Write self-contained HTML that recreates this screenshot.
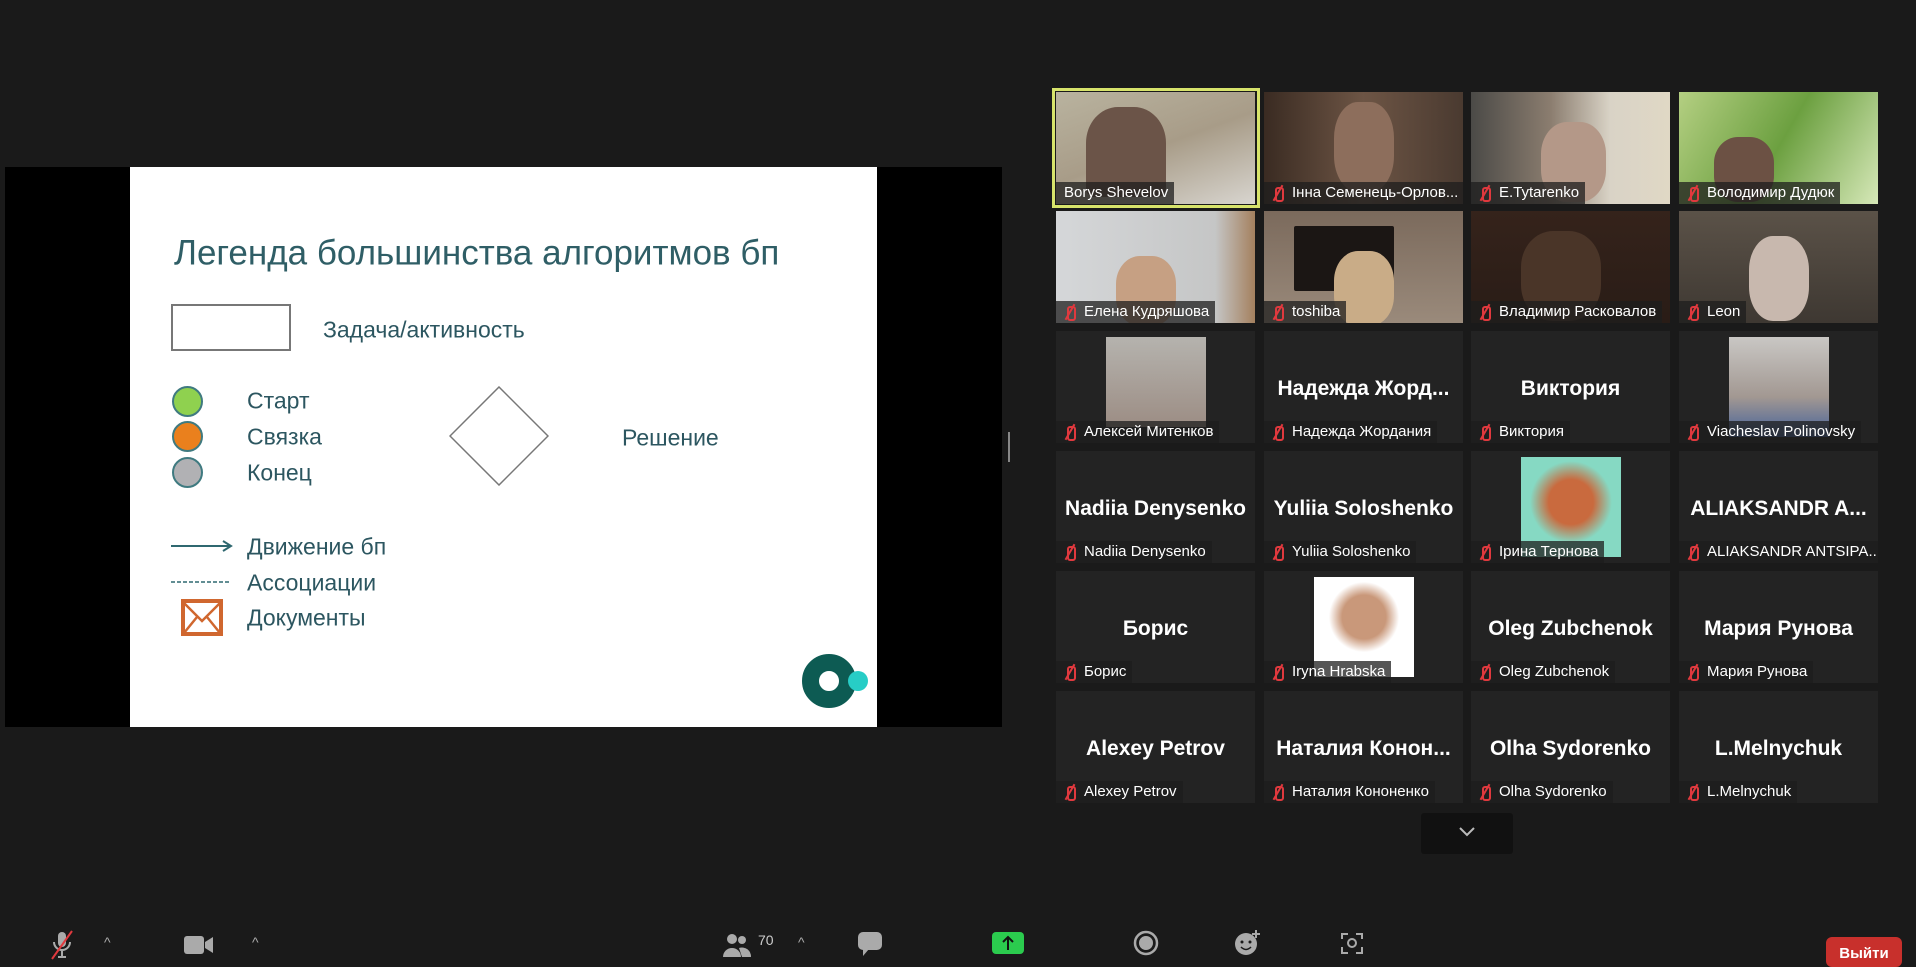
<!DOCTYPE html>
<html><head><meta charset="utf-8"><style>
*{margin:0;padding:0;box-sizing:border-box}
body{width:1916px;height:961px;background:#1a1a1a;position:relative;overflow:hidden;font-family:"Liberation Sans","Noto Sans CJK SC",sans-serif}
.share{position:absolute;left:5px;top:167px;width:997px;height:560px;background:#000}
.slide{position:absolute;left:130px;top:167px;width:747px;height:560px;background:#fff;color:#34595f}
.abs{position:absolute}
.t{position:absolute;font-size:23px;color:#2c5660;line-height:1;transform:translateY(-50%)}
.tile{position:absolute;width:199px;height:112px;background:#232323;overflow:hidden}
.big{position:absolute;left:0;right:0;top:46px;text-align:center;color:#fff;font-weight:bold;font-size:21px;white-space:nowrap}
.lbl{position:absolute;left:0;bottom:0;height:22px;background:rgba(30,30,30,.75);color:#fff;font-size:15px;line-height:22px;padding:0 6px 0 28px;white-space:nowrap;max-width:199px;overflow:hidden}
.lbl:before{content:"";position:absolute;left:11px;top:5px;width:5px;height:11px;border:2px solid #e0393e;border-radius:3px}
.lbl:after{content:"";position:absolute;left:13px;top:2px;width:2px;height:18px;background:#e0393e;transform:rotate(30deg)}
.nomic{padding-left:8px}.nomic:before,.nomic:after{display:none}
.ph{position:absolute;top:6px;width:100px;height:100px}
.ic{position:absolute;top:930px;fill:#aaa;color:#aaa}
</style></head><body>
<div class="share"></div>
<div class="slide">
 <div class="t" style="left:44px;top:86px;font-size:35px;color:#2f5e66">Легенда большинства алгоритмов бп</div>
 <div class="abs" style="left:41px;top:137px;width:120px;height:47px;border:2px solid #777"></div>
 <div class="t" style="left:193px;top:163px">Задача/активность</div>
 <div class="abs" style="left:42px;top:219px;width:31px;height:31px;border-radius:50%;background:#8fd14f;border:2px solid #3f7a80"></div>
 <div class="abs" style="left:42px;top:254px;width:31px;height:31px;border-radius:50%;background:#ea801d;border:2px solid #3f7a80"></div>
 <div class="abs" style="left:42px;top:290px;width:31px;height:31px;border-radius:50%;background:#b1b1b4;border:2px solid #3f7a80"></div>
 <div class="t" style="left:117px;top:234px">Старт</div>
 <div class="t" style="left:117px;top:270px">Связка</div>
 <div class="t" style="left:117px;top:306px">Конец</div>
 <svg class="abs" style="left:319px;top:219px" width="100" height="100"><polygon points="50,1 99,50 50,99 1,50" fill="none" stroke="#777" stroke-width="1.5"/></svg>
 <div class="t" style="left:492px;top:271px">Решение</div>
 <svg class="abs" style="left:41px;top:370px" width="64" height="18"><line x1="0" y1="9" x2="58" y2="9" stroke="#2f6870" stroke-width="2"/><path d="M52 4 L60 9 L52 14" fill="none" stroke="#2f6870" stroke-width="2"/></svg>
 <div class="t" style="left:117px;top:380px">Движение бп</div>
 <svg class="abs" style="left:41px;top:406px" width="64" height="18"><line x1="0" y1="9" x2="60" y2="9" stroke="#2f6870" stroke-width="1.5" stroke-dasharray="4 2"/></svg>
 <div class="t" style="left:117px;top:416px">Ассоциации</div>
 <svg class="abs" style="left:51px;top:432px" width="42" height="37"><rect x="2" y="2" width="38" height="33" fill="#fff" stroke="#d0672f" stroke-width="4"/><path d="M3 4 L21 22 L39 4 M3 34 L16 18 M39 34 L26 18" fill="none" stroke="#d0672f" stroke-width="2.5"/></svg>
 <div class="t" style="left:117px;top:451px">Документы</div>
 <div class="abs" style="left:672px;top:487px;width:54px;height:54px;border-radius:50%;border:17px solid #0d5b53"></div>
 <div class="abs" style="left:718px;top:504px;width:20px;height:20px;border-radius:50%;background:#27cdc6"></div>
</div>
<div class="abs" style="left:1008px;top:432px;width:2px;height:30px;border-left:1px solid #888;border-right:1px solid #888"></div>

<div class="abs" style="left:1052px;top:88px;width:208px;height:120px;border:3px solid #d7e36b"></div>
<div class="tile" style="left:1056px;top:92px;background:linear-gradient(160deg,#b9b39f,#a89c88 50%,#d8d5cf)"><div class="ph" style="left:30px;top:15px;width:80px;height:90px;border-radius:40% 40% 10% 10%;background:#6b5448"></div><div class="lbl nomic">Borys Shevelov</div></div>
<div class="tile" style="left:1264px;top:92px;background:linear-gradient(90deg,#3a2b22,#6d5545 50%,#4a3a30)"><div class="ph" style="left:70px;top:10px;width:60px;height:90px;border-radius:40%;background:#8d6e5c"></div><div class="lbl">Інна Семенець-Орлов...</div></div>
<div class="tile" style="left:1471px;top:92px;background:linear-gradient(90deg,#4b4a47,#8b7d6f 40%,#d9d3c6 70%,#e0d8c5)"><div class="ph" style="left:70px;top:30px;width:65px;height:80px;border-radius:40%;background:#b49888"></div><div class="lbl">E.Tytarenko</div></div>
<div class="tile" style="left:1679px;top:92px;background:linear-gradient(120deg,#b4cf82,#6ca040 50%,#d6e8b8)"><div class="ph" style="left:35px;top:45px;width:60px;height:65px;border-radius:40%;background:#6c5144"></div><div class="lbl">Володимир Дудюк</div></div>
<div class="tile" style="left:1056px;top:211px;background:linear-gradient(90deg,#d5d7d9,#c5c6c6 80%,#a4805e)"><div class="ph" style="left:60px;top:45px;width:60px;height:70px;border-radius:40%;background:#c6a083"></div><div class="lbl">Елена Кудряшова</div></div>
<div class="tile" style="left:1264px;top:211px;background:linear-gradient(180deg,#7b6a5c,#9a8a7b)"><div class="ph" style="left:30px;top:15px;width:100px;height:65px;background:#1b1614;border-radius:2px"></div><div class="ph" style="left:70px;top:40px;width:60px;height:75px;border-radius:40%;background:#c9ac87"></div><div class="lbl">toshiba</div></div>
<div class="tile" style="left:1471px;top:211px;background:linear-gradient(180deg,#35231b,#291c16)"><div class="ph" style="left:50px;top:20px;width:80px;height:90px;border-radius:40%;background:#4a3528"></div><div class="lbl">Владимир Расковалов</div></div>
<div class="tile" style="left:1679px;top:211px;background:linear-gradient(180deg,#5b5248,#3e3832)"><div class="ph" style="left:70px;top:25px;width:60px;height:85px;border-radius:40%;background:#c8b8ae"></div><div class="lbl">Leon</div></div>
<div class="tile" style="left:1056px;top:331px"><div class="ph" style="left:50px;top:6px;width:100px;height:90px;background:linear-gradient(180deg,#b5b3ae,#9c8d84)"></div><div class="lbl">Алексей Митенков</div></div>
<div class="tile" style="left:1264px;top:331px"><div class="big">Надежда Жорд...</div><div class="lbl">Надежда Жордания</div></div>
<div class="tile" style="left:1471px;top:331px"><div class="big">Виктория</div><div class="lbl">Виктория</div></div>
<div class="tile" style="left:1679px;top:331px"><div class="ph" style="left:50px;top:6px;width:100px;height:100px;background:linear-gradient(180deg,#c9c7c4,#a29892 60%,#45629a)"></div><div class="lbl">Viacheslav Polinovsky</div></div>
<div class="tile" style="left:1056px;top:451px"><div class="big">Nadiia Denysenko</div><div class="lbl">Nadiia Denysenko</div></div>
<div class="tile" style="left:1264px;top:451px"><div class="big">Yuliia Soloshenko</div><div class="lbl">Yuliia Soloshenko</div></div>
<div class="tile" style="left:1471px;top:451px"><div class="ph" style="left:50px;top:6px;width:100px;height:100px;background:radial-gradient(circle at 50% 45%,#c96a3e 30%,#86d9c3 55%)"></div><div class="lbl">Ірина Тернова</div></div>
<div class="tile" style="left:1679px;top:451px"><div class="big">ALIAKSANDR A...</div><div class="lbl">ALIAKSANDR ANTSIPA...</div></div>
<div class="tile" style="left:1056px;top:571px"><div class="big">Борис</div><div class="lbl">Борис</div></div>
<div class="tile" style="left:1264px;top:571px"><div class="ph" style="left:50px;top:6px;width:100px;height:100px;background:radial-gradient(circle at 50% 40%,#c9987a 28%,#fff 45%)"></div><div class="lbl">Iryna Hrabska</div></div>
<div class="tile" style="left:1471px;top:571px"><div class="big">Oleg Zubchenok</div><div class="lbl">Oleg Zubchenok</div></div>
<div class="tile" style="left:1679px;top:571px"><div class="big">Мария Рунова</div><div class="lbl">Мария Рунова</div></div>
<div class="tile" style="left:1056px;top:691px"><div class="big">Alexey Petrov</div><div class="lbl">Alexey Petrov</div></div>
<div class="tile" style="left:1264px;top:691px"><div class="big">Наталия Конон...</div><div class="lbl">Наталия Кононенко</div></div>
<div class="tile" style="left:1471px;top:691px"><div class="big">Olha Sydorenko</div><div class="lbl">Olha Sydorenko</div></div>
<div class="tile" style="left:1679px;top:691px"><div class="big">L.Melnychuk</div><div class="lbl">L.Melnychuk</div></div>

<div class="abs" style="left:1421px;top:813px;width:92px;height:41px;background:#111;border-radius:3px"></div>
<svg class="abs" style="left:1458px;top:826px" width="18" height="12"><path d="M2 2 L9 9 L16 2" fill="none" stroke="#bbb" stroke-width="2"/></svg>

<svg class="ic" style="left:48px" width="28" height="30"><rect x="10" y="2" width="8" height="15" rx="4" fill="#aaa"/><path d="M6 12 a8 8 0 0 0 16 0 M14 20 v6 M10 27 h8" stroke="#aaa" stroke-width="2" fill="none"/><line x1="4" y1="29" x2="24" y2="1" stroke="#e0393e" stroke-width="2"/></svg>
<div class="abs" style="left:104px;top:934px;color:#aaa;font-size:14px">^</div>
<svg class="ic" style="left:183px;top:934px" width="32" height="22"><rect x="1" y="2" width="20" height="18" rx="3" fill="#aaa"/><path d="M22 8 L30 3 V19 L22 14Z" fill="#aaa"/></svg>
<div class="abs" style="left:252px;top:934px;color:#aaa;font-size:14px">^</div>
<svg class="ic" style="left:722px;top:932px" width="30" height="26"><circle cx="10" cy="7" r="5" fill="#aaa"/><path d="M1 25 a9 9 0 0 1 18 0Z" fill="#aaa"/><circle cx="20" cy="8" r="4" fill="#aaa"/><path d="M17 16 a9 9 0 0 1 12 9 h-9Z" fill="#aaa"/></svg>
<div class="abs" style="left:758px;top:932px;color:#ccc;font-size:14px">70</div>
<div class="abs" style="left:798px;top:934px;color:#aaa;font-size:14px">^</div>
<svg class="ic" style="left:857px;top:931px" width="26" height="26"><rect x="1" y="1" width="24" height="18" rx="5" fill="#aaa"/><path d="M6 18 L6 25 L12 18Z" fill="#aaa"/></svg>
<div class="abs" style="left:992px;top:932px;width:32px;height:22px;background:#2bcb4e;border-radius:4px"></div>
<svg class="abs" style="left:1000px;top:934px" width="16" height="18"><path d="M8 16 V3 M3 8 L8 3 L13 8" stroke="#111" stroke-width="2" fill="none"/></svg>
<svg class="ic" style="left:1133px;top:930px" width="26" height="26"><circle cx="13" cy="13" r="11" fill="none" stroke="#aaa" stroke-width="2.5"/><circle cx="13" cy="13" r="7" fill="#aaa"/></svg>
<svg class="ic" style="left:1233px;top:929px" width="28" height="28"><circle cx="13" cy="15" r="11" fill="#aaa"/><circle cx="9" cy="13" r="1.5" fill="#1a1a1a"/><circle cx="17" cy="13" r="1.5" fill="#1a1a1a"/><path d="M8 18 q5 5 10 0" stroke="#1a1a1a" stroke-width="1.5" fill="none"/><path d="M23 1 v8 M19 5 h8" stroke="#aaa" stroke-width="2"/></svg>
<svg class="ic" style="left:1340px;top:931px" width="24" height="24"><path d="M2 8 V3 H8 M16 3 H22 V8 M22 16 V22 H16 M8 22 H2 V16" stroke="#aaa" stroke-width="2" fill="none"/><circle cx="12" cy="12" r="4" fill="none" stroke="#aaa" stroke-width="2"/></svg>
<div class="abs" style="left:1826px;top:937px;width:76px;height:30px;background:#c8302c;border-radius:6px;color:#fff;font-size:15px;font-weight:bold;text-align:center;padding-top:8px">Выйти</div>
</body></html>
